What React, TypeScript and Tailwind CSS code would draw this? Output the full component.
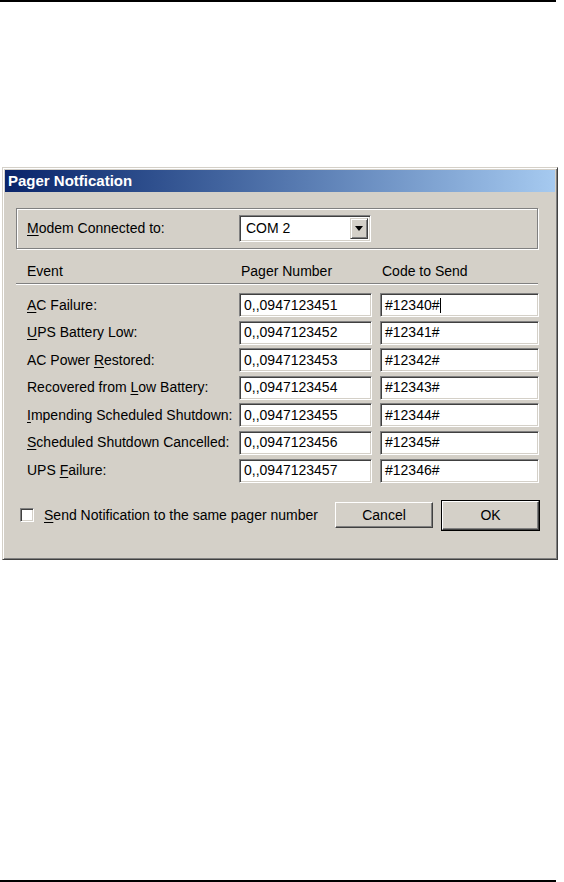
import React from "react";

const sunken =
  "border border-t-[#808080] border-l-[#808080] border-b-white border-r-white shadow-[inset_1px_1px_#404040,inset_-1px_-1px_#d4d0c8] bg-white";

function U({ c }: { c: string }) {
  return <span className="underline underline-offset-2 decoration-1">{c}</span>;
}

const rows: { label: React.ReactNode; pager: string; code: string }[] = [
  { label: <><U c="A" />C Failure:</>, pager: "0,,0947123451", code: "#12340#" },
  { label: <><U c="U" />PS Battery Low:</>, pager: "0,,0947123452", code: "#12341#" },
  { label: <>AC Power <U c="R" />estored:</>, pager: "0,,0947123453", code: "#12342#" },
  { label: <>Recovered from <U c="L" />ow Battery:</>, pager: "0,,0947123454", code: "#12343#" },
  { label: <><U c="I" />mpending Scheduled Shutdown:</>, pager: "0,,0947123455", code: "#12344#" },
  { label: <><U c="S" />cheduled Shutdown Cancelled:</>, pager: "0,,0947123456", code: "#12345#" },
  { label: <>UPS <U c="F" />ailure:</>, pager: "0,,0947123457", code: "#12346#" },
];

export default function App() {
  return (
    <div
      className="w-[564px] h-[882px] bg-white flex flex-col text-[14px] text-black"
      style={{ fontFamily: '"Liberation Sans", Arial, sans-serif' }}
    >
      <div className="h-[2px] w-[556px] bg-black shrink-0" />
      <div className="mt-[165px] ml-[2px] w-[556px] h-[393px] shrink-0 bg-[#d4d0c8] border border-t-[#d4d0c8] border-l-[#d4d0c8] border-r-[#404040] border-b-[#404040] shadow-[inset_1px_1px_#fff,inset_-1px_-1px_#808080] p-[2px] flex flex-col">
        <div className="h-[22px] shrink-0 bg-gradient-to-r from-[#0a246a] to-[#a6caf0] flex items-center pl-[3px] text-white font-bold text-[15px]">
          Pager Notfication
        </div>
        <div className="pl-[11px] pt-[16px] flex flex-col">
          <div className="w-[522px] h-[41px] border border-[#808080] shadow-[inset_1px_1px_#fff,1px_1px_#fff] flex items-center pl-[10px]">
            <div className="w-[212px]">
              <U c="M" />odem Connected to:
            </div>
            <div className={`${sunken} w-[132px] h-[27px] flex items-center p-[2px]`}>
              <span className="pl-[4px] flex-1">COM 2</span>
              <div className="w-[18px] h-[21px] bg-[#d4d0c8] border border-t-[#d4d0c8] border-l-[#d4d0c8] border-r-[#404040] border-b-[#404040] shadow-[inset_1px_1px_#fff,inset_-1px_-1px_#808080] flex items-center justify-center">
                <svg width="8" height="5" viewBox="0 0 8 5">
                  <path d="M0 0h8L4 5z" fill="#000" />
                </svg>
              </div>
            </div>
          </div>

          <div className="mt-[12px] h-[20px] flex items-center pl-[11px]">
            <div className="w-[212px]">Event</div>
            <div className="w-[141px] pl-[2px]">Pager Number</div>
            <div className="pl-[2px]">Code to Send</div>
          </div>
          <div className="mt-[2px] w-[522px] h-[2px] border-t border-t-[#808080] border-b border-b-white" />

          <div className="mt-[8px] flex flex-col gap-[3.6px]">
            {rows.map((r, i) => (
              <div key={i} className="h-[24px] flex items-center pl-[11px]">
                <div className="w-[212px] whitespace-nowrap">{r.label}</div>
                <div className={`${sunken} w-[133px] h-[24px] flex items-center pl-[4px]`}>{r.pager}</div>
                <div className={`${sunken} ml-[8px] w-[159px] h-[24px] flex items-center pl-[4px]`}>
                  {r.code}
                  {i === 0 && <span className="w-[1px] h-[15px] bg-black" />}
                </div>
              </div>
            ))}
          </div>

          <div className="mt-[17px] w-[524px] h-[31px] flex items-center">
            <div className={`${sunken} ml-[4px] w-[14px] h-[14px]`} />
            <div className="ml-[10px] whitespace-nowrap">
              <U c="S" />end Notification to the same pager number
            </div>
            <div className="ml-auto flex items-center gap-[8px]">
              <div className="w-[98px] h-[26px] bg-[#d4d0c8] border border-t-white border-l-white border-r-[#404040] border-b-[#404040] shadow-[inset_-1px_-1px_#808080] flex items-center justify-center">
                Cancel
              </div>
              <div className="w-[99px] h-[31px] border border-black bg-[#d4d0c8]">
                <div className="w-full h-full bg-[#d4d0c8] border border-t-white border-l-white border-r-[#404040] border-b-[#404040] shadow-[inset_-1px_-1px_#808080] flex items-center justify-center">
                  OK
                </div>
              </div>
            </div>
          </div>
        </div>
      </div>
      <div className="flex-1" />
      <div className="h-[2px] w-[556px] bg-black shrink-0 mb-0" />
    </div>
  );
}
